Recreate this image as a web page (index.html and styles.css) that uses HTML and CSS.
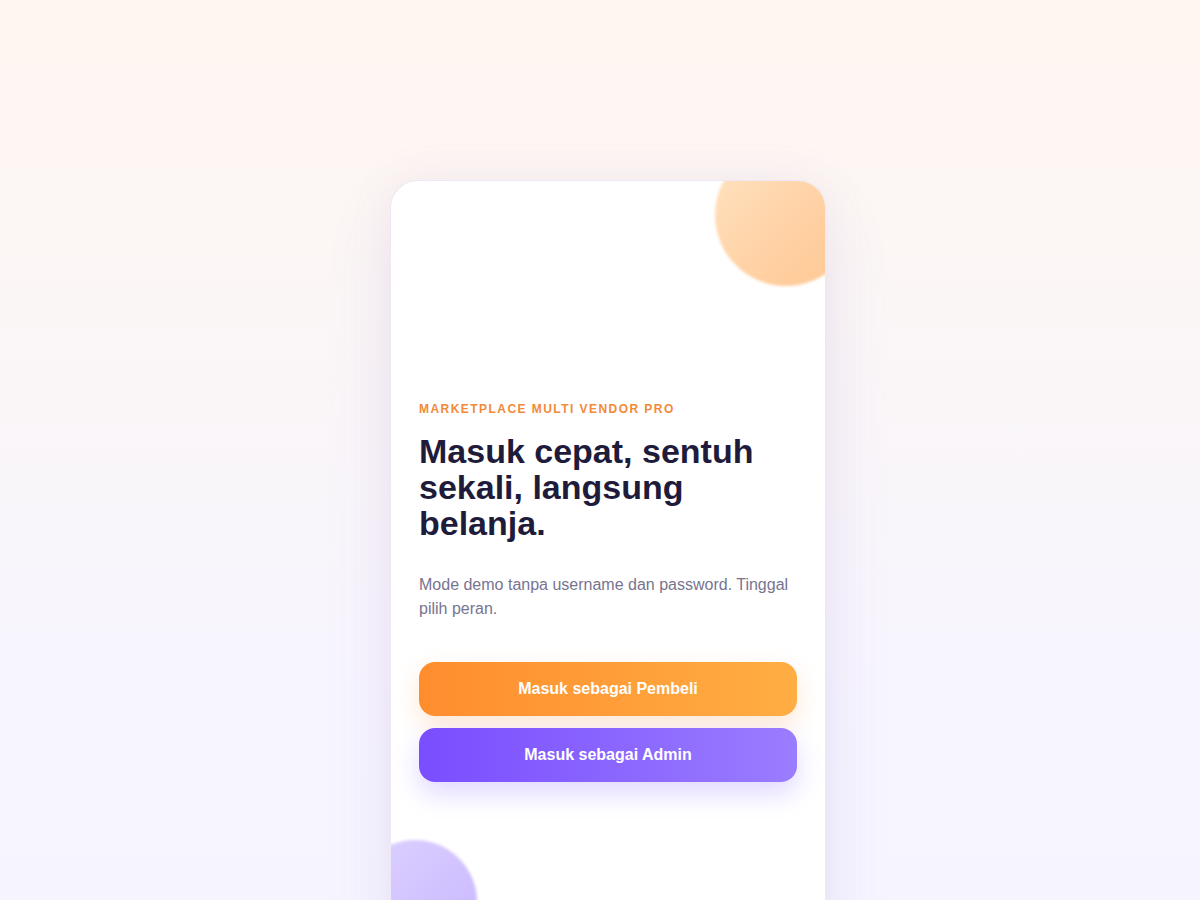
FILE: index.html
```html
<!DOCTYPE html>
<html lang="id">
<head>
<meta charset="utf-8">
<title>Marketplace Multi Vendor Pro</title>
<link rel="stylesheet" href="styles.css">
</head>
<body>
<main class="page">
  <section class="card">
    <div class="blob blob-orange"></div>
    <div class="blob blob-purple"></div>
    <div class="content">
      <p class="eyebrow">MARKETPLACE MULTI VENDOR PRO</p>
      <h1 class="title">Masuk cepat, sentuh sekali, langsung belanja.</h1>
      <p class="lead">Mode demo tanpa username dan password. Tinggal pilih peran.</p>
      <div class="actions">
        <button class="btn btn-buyer" type="button">Masuk sebagai Pembeli</button>
        <button class="btn btn-admin" type="button">Masuk sebagai Admin</button>
      </div>
    </div>
  </section>
</main>
</body>
</html>
```

FILE: styles.css
```css
* { box-sizing: border-box; }
html, body { margin: 0; padding: 0; }
body {
  font-family: "Liberation Sans", Arial, sans-serif;
  background: linear-gradient(180deg, #fff6f0 0%, #faf6f8 40%, #f7f5ff 70%, #f6f5ff 100%);
  min-height: 100vh;
}
.page {
  display: flex;
  justify-content: center;
  padding-top: 180px;
  padding-left: 16px;
}
.card {
  position: relative;
  width: 436px;
  height: 822px;
  background: #ffffff;
  border: 1px solid rgba(235, 225, 240, 0.8);
  border-radius: 28px;
  overflow: hidden;
  box-shadow: 0 30px 70px rgba(130, 100, 210, 0.10), 0 0 40px rgba(200, 170, 200, 0.12);
}
.blob {
  position: absolute;
  border-radius: 50%;
  filter: blur(1.5px);
}
.blob-orange {
  width: 142px;
  height: 142px;
  top: -37px;
  right: -32px;
  background: linear-gradient(135deg, #ffe4c4 0%, #ffd0a2 60%, #ffc792 100%);
}
.blob-purple {
  width: 124px;
  height: 124px;
  top: 659px;
  left: -38px;
  background: linear-gradient(135deg, #ddd2ff 0%, #c7b5ff 100%);
}
.content {
  position: relative;
  padding: 220px 28px 0 28px;
}
.eyebrow {
  margin: 0 0 16px;
  font-size: 12px;
  line-height: 16px;
  font-weight: 700;
  letter-spacing: 1.45px;
  color: #f28a38;
}
.title {
  margin: 0 0 32px;
  font-size: 34px;
  line-height: 36px;
  font-weight: 700;
  color: #1e1b3b;
}
.lead {
  margin: 0;
  font-size: 16px;
  line-height: 24px;
  color: #777490;
}
.actions {
  margin-top: 41px;
  display: flex;
  flex-direction: column;
  gap: 12px;
}
.btn {
  height: 54px;
  border: none;
  border-radius: 16px;
  font-family: "Liberation Sans", Arial, sans-serif;
  font-size: 16px;
  font-weight: 700;
  color: #ffffff;
  cursor: pointer;
}
.btn-buyer {
  background: linear-gradient(90deg, #ff8d2e 0%, #ffae43 100%);
  box-shadow: 0 10px 24px rgba(255, 150, 60, 0.22);
}
.btn-admin {
  background: linear-gradient(90deg, #7a4dff 0%, #9a7dff 100%);
  box-shadow: 0 12px 26px rgba(120, 80, 255, 0.22);
}
```
